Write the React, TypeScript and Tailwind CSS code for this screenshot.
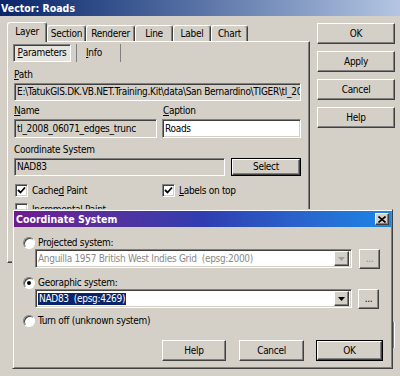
import type { ReactNode } from "react";

// Windows-classic bevels
const raised =
  "border border-t-white border-l-white border-r-[#404040] border-b-[#404040] shadow-[inset_-1px_-1px_0_#808080]";
const sunken =
  "border border-t-[#808080] border-l-[#808080] border-r-white border-b-white shadow-[inset_1px_1px_0_#404040,inset_-1px_-1px_0_#d4d0c8]";

function Btn({ children, w, h = "h-[21px]", def = false }: { children: ReactNode; w: string; h?: string; def?: boolean }) {
  const face = (
    <div className={`${raised} flex h-full w-full items-center justify-center bg-[#d4d0c8]`}>{children}</div>
  );
  return <div className={`${w} ${h} shrink-0 ${def ? "border border-black" : ""}`}>{face}</div>;
}

function Check({ on, label }: { on?: boolean; label: ReactNode }) {
  return (
    <div className="flex items-center">
      <div className={`${sunken} flex h-[13px] w-[13px] items-center justify-center bg-white`}>
        {on && (
          <svg width="9" height="9" viewBox="0 0 9 9">
            <path d="M1 4 L3.5 6.5 L8 1.5" stroke="#000" strokeWidth="1.8" fill="none" />
          </svg>
        )}
      </div>
      <span className="ml-[4px]">{label}</span>
    </div>
  );
}

function Radio({ on, label }: { on?: boolean; label: string }) {
  return (
    <div className="flex h-[12px] items-center">
      <div className="flex h-[12px] w-[12px] items-center justify-center rounded-full border border-t-[#808080] border-l-[#808080] border-r-white border-b-white bg-white shadow-[inset_1px_1px_0_#404040]">
        {on && <div className="h-[4px] w-[4px] rounded-full bg-black" />}
      </div>
      <span className="ml-[3px]">{label}</span>
    </div>
  );
}

function Combo({ children, disabled }: { children: ReactNode; disabled?: boolean }) {
  return (
    <div className={`${sunken} flex h-[19px] w-[317px] items-center bg-white pl-[2px] pr-[2px]`}>
      <div className={`flex-1 truncate ${disabled ? "text-[#8a8a8a]" : ""}`}>{children}</div>
      <div className={`${raised} flex h-[15px] w-[15px] items-center justify-center bg-[#d4d0c8]`}>
        <svg width="7" height="4" viewBox="0 0 7 4">
          <path d="M0 0 H7 L3.5 4 Z" fill={disabled ? "#a0a0a0" : "#000"} />
        </svg>
      </div>
    </div>
  );
}

const tabs = [
  { label: "Layer", w: "w-[40px]", active: true },
  { label: "Section", w: "w-[39px]" },
  { label: "Renderer", w: "w-[49px]" },
  { label: "Line", w: "w-[38px]" },
  { label: "Label", w: "w-[38px]" },
  { label: "Chart", w: "w-[37px]" },
];

const u = (s: string) => <span className="underline underline-offset-[1px]">{s}</span>;

export default function App() {
  return (
    <div className="relative h-[376px] w-[400px] overflow-hidden bg-[#d4d0c8] font-['DejaVu_Sans_Condensed','Liberation_Sans',sans-serif] text-[10px] leading-[12px] tracking-[-0.3px] text-black">
      {/* outer title bar */}
      <div className="flex h-[16px] items-center bg-linear-to-r from-[#0a246a] to-[#b4c6e2] pl-[1px] text-[10.5px] font-bold tracking-normal text-white">
        Vector: Roads
      </div>

      <div className="flex">
        {/* tab control */}
        <div className="ml-[7px] w-[303px] pt-[6px]">
          <div className="flex h-[19px] items-end">
            {tabs.map((t) => (
              <div
                key={t.label}
                className={`${t.w} flex items-center justify-center rounded-t-[3px] border-l border-t border-r border-l-white border-t-white border-r-[#404040] bg-[#d4d0c8] shadow-[inset_-1px_0_0_#808080] ${
                  t.active ? "relative z-10 -mb-px h-[20px] pb-[2px]" : "h-[16px]"
                }`}
              >
                {t.label}
              </div>
            ))}
          </div>
          <div className={`h-[222px] ${raised} bg-[#d4d0c8] pl-[6px] pr-[8px] pt-[2px]`}>
            {/* inner tabs */}
            <div className="flex h-[18px]">
              <div className="-ml-px flex w-[58px] items-center justify-center border border-t-[#808080] border-l-[#808080] border-r-white border-b-white bg-[#e6e4de] shadow-[inset_1px_1px_0_#404040]">
                {u("P")}arameters
              </div>
              <div className="ml-[5px] flex w-[45px] items-center border-x border-x-[#808080] pl-[9px]">
                {u("I")}nfo
              </div>
            </div>

            <div className="mt-[7px]">{u("P")}ath</div>
            <div className={`${sunken} mt-[2px] flex h-[18px] w-[287px] items-center overflow-hidden whitespace-nowrap pl-[2px]`}>
              E:\TatukGIS.DK.VB.NET.Training.Kit\data\San Bernardino\TIGER\tl_2008
            </div>

            <div className="mt-[4px] flex">
              <div className="w-[148px]">
                <div>{u("N")}ame</div>
                <div className={`${sunken} mt-[2px] flex h-[19px] w-[143px] items-center pl-[2px]`}>
                  tl_2008_06071_edges_trunc
                </div>
              </div>
              <div>
                <div className="pl-[1px]">{u("C")}aption</div>
                <div className={`${sunken} mt-[2px] flex h-[19px] w-[139px] items-center bg-white pl-[2px]`}>
                  Roads
                </div>
              </div>
            </div>

            <div className="mt-[6px]">Coordinate System</div>
            <div className="mt-[2px] flex">
              <div className={`${sunken} flex h-[18px] w-[211px] items-center pl-[2px]`}>NAD83</div>
              <div className="ml-[6px]">
                <Btn w="w-[70px]" h="h-[18px]" def>
                  Select
                </Btn>
              </div>
            </div>

            <div className="mt-[8px] flex">
              <div className="w-[148px] pl-[1px]">
                <Check on label={<>Cache{u("d")} Paint</>} />
              </div>
              <Check on label={<>{u("L")}abels on top</>} />
            </div>
            <div className="mt-[6px] pl-[1px]">
              <Check label={<>{u("I")}ncremental Paint</>} />
            </div>
          </div>
        </div>

        {/* dialog buttons */}
        <div className="ml-[7px] flex flex-col gap-[7px] pt-[7px]">
          <Btn w="w-[78px]">OK</Btn>
          <Btn w="w-[78px]">Apply</Btn>
          <Btn w="w-[78px]">Cancel</Btn>
          <Btn w="w-[78px]">Help</Btn>
        </div>
      </div>

      {/* stray edge of the window behind */}
      <div className="absolute left-[393px] top-[322px] h-[26px] w-[2px] border-l border-r border-l-[#808080] border-r-white" />

      {/* Coordinate System dialog, on top */}
      <div className="absolute left-[12px] top-[209px] h-[160px] w-[381px] border border-t-[#d4d0c8] border-l-[#d4d0c8] border-r-[#404040] border-b-[#404040] bg-[#d4d0c8] p-px shadow-[inset_1px_1px_0_#fff,inset_-1px_-1px_0_#808080]">
        <div className="flex h-[16px] items-center justify-between bg-linear-to-r from-[#6e1a8e] via-[#2e3db0] to-[#1a86e6] pl-[2px] pr-[2px]">
          <span className="text-[10.5px] font-bold tracking-normal text-white">Coordinate System</span>
          <div className={`${raised} flex h-[12px] w-[14px] items-center justify-center bg-[#d4d0c8]`}>
            <svg width="8" height="7" viewBox="0 0 8 7">
              <path d="M0.5 0.5 L7.5 6.5 M7.5 0.5 L0.5 6.5" stroke="#000" strokeWidth="1.6" />
            </svg>
          </div>
        </div>

        <div className="pl-[9px]">
          <div className="mt-[10px]">
            <Radio label="Projected system:" />
          </div>
          <div className="ml-[12px] flex">
            <Combo disabled>Anguilla 1957 British West Indies Grid&nbsp;&nbsp;(epsg:2000)</Combo>
            <div className="ml-[7px] text-[#8a8a8a]">
              <Btn w="w-[21px]" h="h-[20px]">...</Btn>
            </div>
          </div>

          <div className="mt-[8px]">
            <Radio on label="Georaphic system:" />
          </div>
          <div className="ml-[12px] flex">
            <Combo>
              <span className="bg-[#0a246a] px-px py-[2px] text-white">NAD83&nbsp;&nbsp;(epsg:4269)</span>
            </Combo>
            <div className="ml-[6px]">
              <Btn w="w-[21px]" h="h-[20px]">...</Btn>
            </div>
          </div>

          <div className="mt-[6px]">
            <Radio label="Turn off (unknown system)" />
          </div>

          <div className="mt-[13px] flex pl-[139px]">
            <Btn w="w-[64px]">Help</Btn>
            <div className="ml-[13px]">
              <Btn w="w-[65px]">Cancel</Btn>
            </div>
            <div className="ml-[12px]">
              <Btn w="w-[67px]" def>
                OK
              </Btn>
            </div>
          </div>
        </div>
      </div>
    </div>
  );
}
